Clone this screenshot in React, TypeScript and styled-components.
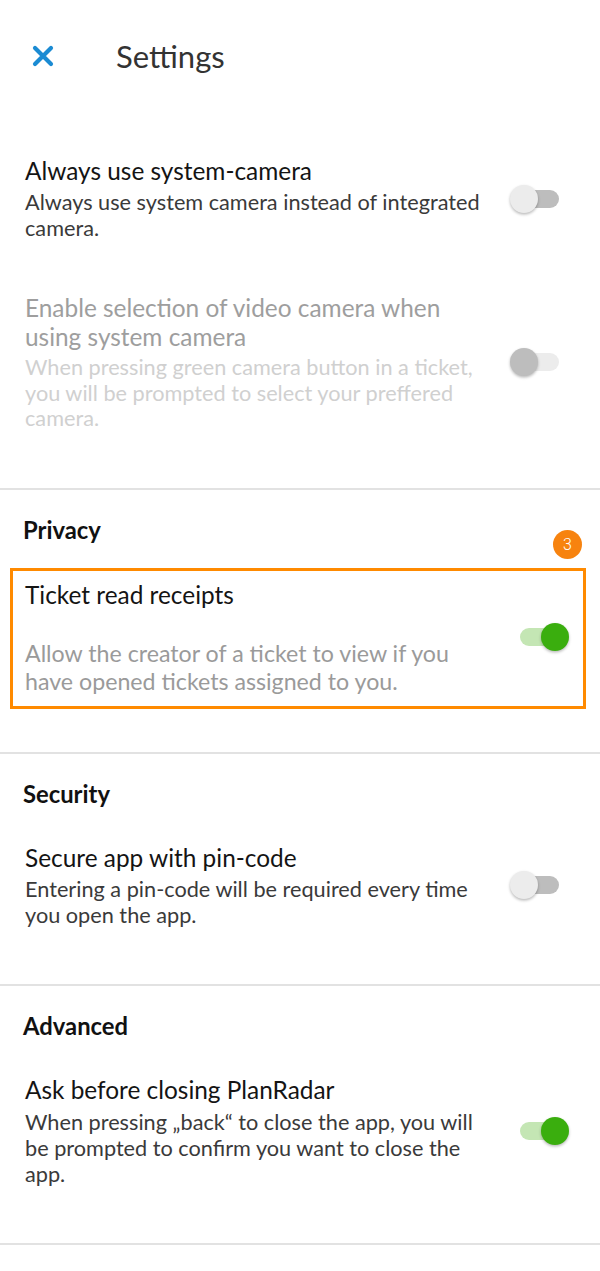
import React from "react";
import styled, { createGlobalStyle } from "styled-components";

const Global = createGlobalStyle`
  html, body { margin: 0; padding: 0; background: #fff; }
  body { font-family: Lato, "Open Sans", sans-serif; -webkit-font-smoothing: antialiased; }
  * { box-sizing: border-box; }
`;

const Page = styled.div`
  width: 600px;
  min-height: 1271px;
  background: #fff;
  display: flex;
  flex-direction: column;
`;

const Header = styled.header`
  height: 112px;
  display: flex;
  align-items: center;
  padding-left: 32px;
  gap: 62px;
`;

const CloseButton = styled.button`
  border: 0;
  background: none;
  padding: 0;
  width: 22px;
  height: 22px;
  display: flex;
  align-items: center;
  justify-content: center;
  cursor: pointer;
`;

const Title = styled.h1`
  margin: 0;
  font-size: 31px;
  font-weight: 400;
  color: #333;
  line-height: 34px;
`;

const Section = styled.section<{ $divider?: boolean; $top?: number; $bottom?: number }>`
  border-top: ${(p) => (p.$divider ? "2px solid #e2e2e2" : "0")};
  padding-top: ${(p) => p.$top ?? 25}px;
  padding-bottom: ${(p) => p.$bottom ?? 56}px;
  display: flex;
  flex-direction: column;
`;

const SectionTitle = styled.h2<{ $mb?: number }>`
  margin: 0 0 ${(p) => p.$mb ?? 34}px 23px;
  font-size: 23.8px;
  font-weight: 700;
  color: #111;
  line-height: 30px;
`;

const Row = styled.div<{ $gap?: number }>`
  display: flex;
  align-items: center;
  padding: 0 30px 0 25px;
  margin-top: ${(p) => p.$gap ?? 0}px;
`;

const Texts = styled.div`
  flex: 1;
  min-width: 0;
  padding-right: 18px;
  display: flex;
  flex-direction: column;
`;

const ItemTitle = styled.div<{ $disabled?: boolean; $lh?: number }>`
  font-size: 24.4px;
  line-height: ${(p) => p.$lh ?? 30}px;
  color: ${(p) => (p.$disabled ? "#9e9e9e" : "#141414")};
`;

const ItemText = styled.div<{ $tone?: "normal" | "disabled" | "muted"; $lh?: number; $mt?: number; $size?: number }>`
  font-size: ${(p) => p.$size ?? 21.7}px;
  line-height: ${(p) => p.$lh ?? 26}px;
  margin-top: ${(p) => p.$mt ?? 3}px;
  color: ${(p) =>
    p.$tone === "disabled" ? "#d0d0d0" : p.$tone === "muted" ? "#9a9a9a" : "#3a3a3a"};
`;

const Highlight = styled.div`
  position: relative;
  margin: 23px 14px 0 10px;
  border: 3px solid #ff8a00;
  padding: 9px 0 11px 0;
`;

const HighlightRow = styled.div`
  display: flex;
  align-items: center;
  padding: 0 13px 0 12px;
`;

const Badge = styled.div`
  position: absolute;
  top: -41px;
  right: 1px;
  width: 29px;
  height: 29px;
  border-radius: 50%;
  background: #f7830f;
  color: #fff;
  font-size: 16px;
  font-weight: 300;
  font-family: Roboto, "Liberation Sans", sans-serif;
  display: flex;
  align-items: center;
  justify-content: center;
`;

const SwitchBox = styled.div`
  position: relative;
  width: 60px;
  height: 30px;
  flex: none;
`;

const Track = styled.div<{ $state: "off" | "on" | "disabled" }>`
  position: absolute;
  left: 10px;
  right: 11px;
  top: 6px;
  height: 18px;
  border-radius: 9px;
  background: ${(p) =>
    p.$state === "on" ? "#c4e6b4" : p.$state === "disabled" ? "#ececec" : "#bdbdbd"};
`;

const Thumb = styled.div<{ $state: "off" | "on" | "disabled" }>`
  position: absolute;
  top: 1px;
  left: ${(p) => (p.$state === "on" ? 31 : 0)}px;
  width: 28px;
  height: 28px;
  border-radius: 50%;
  background: ${(p) =>
    p.$state === "on" ? "#3aae0e" : p.$state === "disabled" ? "#bdbdbd" : "#ececec"};
  box-shadow: 0 1.5px 3px rgba(0, 0, 0, 0.28);
`;

const Switch = ({ state }: { state: "off" | "on" | "disabled" }) => (
  <SwitchBox>
    <Track $state={state} />
    <Thumb $state={state} />
  </SwitchBox>
);

export default function App() {
  return (
    <Page>
      <Global />
      <Header>
        <CloseButton aria-label="Close">
          <svg width="22" height="22" viewBox="0 0 22 22">
            <path d="M3 3 L19 19 M19 3 L3 19" stroke="#1b8bd3" strokeWidth="4.2" strokeLinecap="round" />
          </svg>
        </CloseButton>
        <Title>Settings</Title>
      </Header>

      <Section $top={44} $bottom={56}>
        <Row>
          <Texts>
            <ItemTitle>Always use system-camera</ItemTitle>
            <ItemText>Always use system camera instead of integrated camera.</ItemText>
          </Texts>
          <Switch state="off" />
        </Row>
        <Row $gap={52}>
          <Texts>
            <ItemTitle $disabled $lh={29}>
              Enable selection of video camera when using system camera
            </ItemTitle>
            <ItemText $tone="disabled" $lh={25.5} $mt={4}>
              When pressing green camera button in a ticket, you will be prompted to select your preffered camera.
            </ItemText>
          </Texts>
          <Switch state="disabled" />
        </Row>
      </Section>

      <Section $divider $bottom={43}>
        <SectionTitle $mb={0}>Privacy</SectionTitle>
        <Highlight>
          <Badge>3</Badge>
          <HighlightRow>
            <Texts>
              <ItemTitle>Ticket read receipts</ItemTitle>
              <ItemText $tone="muted" $lh={28} $mt={29} $size={23.2}>
                Allow the creator of a ticket to view if you have opened tickets assigned to you.
              </ItemText>
            </Texts>
            <Switch state="on" />
          </HighlightRow>
        </Highlight>
      </Section>

      <Section $divider>
        <SectionTitle>Security</SectionTitle>
        <Row>
          <Texts>
            <ItemTitle>Secure app with pin-code</ItemTitle>
            <ItemText>Entering a pin-code will be required every time you open the app.</ItemText>
          </Texts>
          <Switch state="off" />
        </Row>
      </Section>

      <Section $divider>
        <SectionTitle>Advanced</SectionTitle>
        <Row>
          <Texts>
            <ItemTitle>Ask before closing PlanRadar</ItemTitle>
            <ItemText $mt={4}>
              When pressing „back“ to close the app, you will be prompted to confirm you want to close the app.
            </ItemText>
          </Texts>
          <Switch state="on" />
        </Row>
      </Section>
      <Section $divider $top={0} $bottom={0} />
    </Page>
  );
}
